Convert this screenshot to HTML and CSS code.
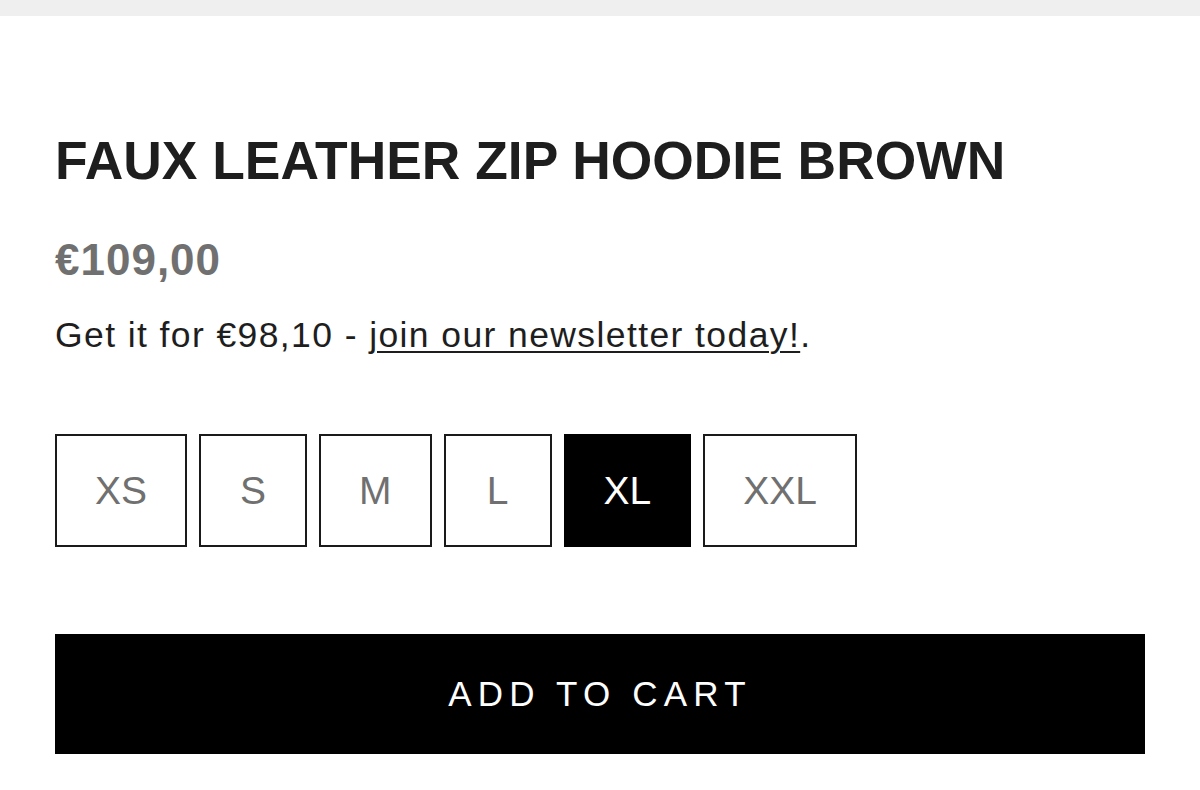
FILE: index.html
```html
<!DOCTYPE html>
<html lang="en">
<head>
<meta charset="utf-8">
<title>Faux Leather Zip Hoodie Brown</title>
<link rel="stylesheet" href="styles.css">
</head>
<body>
<div class="topbar"></div>
<main class="product">
  <h1 class="title">FAUX LEATHER ZIP HOODIE BROWN</h1>
  <div class="price">€109,00</div>
  <p class="promo">Get it for €98,10 - <a href="#" class="promo-link">join our newsletter today!</a>.</p>
  <div class="sizes">
    <button class="size">XS</button>
    <button class="size">S</button>
    <button class="size">M</button>
    <button class="size">L</button>
    <button class="size size-active">XL</button>
    <button class="size">XXL</button>
  </div>
  <button class="add-to-cart">ADD TO CART</button>
</main>
</body>
</html>
```
FILE: styles.css
```css
html, body {
  margin: 0;
  padding: 0;
  background: #ffffff;
}
body {
  font-family: "Liberation Sans", Arial, Helvetica, sans-serif;
  color: #1c1c1c;
  width: 1200px;
  height: 790px;
  overflow: hidden;
}
.topbar {
  height: 16px;
  background: #efefef;
}
.product {
  padding: 118px 55px 0 55px;
  display: flex;
  flex-direction: column;
  align-items: flex-start;
}
.title {
  margin: 0;
  font-size: 53.4px;
  line-height: 54px;
  font-weight: 700;
  color: #1e1e1e;
}
.price {
  margin-top: 50px;
  font-size: 44px;
  line-height: 44px;
  font-weight: 700;
  letter-spacing: 1px;
  color: #707070;
}
.promo {
  margin: 36px 0 0 0;
  font-size: 35.5px;
  line-height: 35px;
  letter-spacing: 1.4px;
  color: #1e1e1e;
}
.promo-link {
  color: #1e1e1e;
  text-decoration: underline;
  text-decoration-thickness: 2px;
  text-underline-offset: 4px;
}
.sizes {
  margin-top: 81px;
  display: flex;
  gap: 12px;
}
.size {
  height: 113px;
  min-width: 108px;
  box-sizing: border-box;
  border: 2px solid #1a1a1a;
  background: #ffffff;
  padding: 0 38px;
  font-family: inherit;
  font-size: 39px;
  color: #707070;
  display: flex;
  align-items: center;
  justify-content: center;
}
.size-active {
  background: #000000;
  border-color: #000000;
  color: #ffffff;
}
.add-to-cart {
  margin-top: 87px;
  align-self: stretch;
  height: 120px;
  border: none;
  background: #000000;
  color: #ffffff;
  font-family: inherit;
  font-size: 35px;
  letter-spacing: 6.2px;
  padding: 0;
}
```
